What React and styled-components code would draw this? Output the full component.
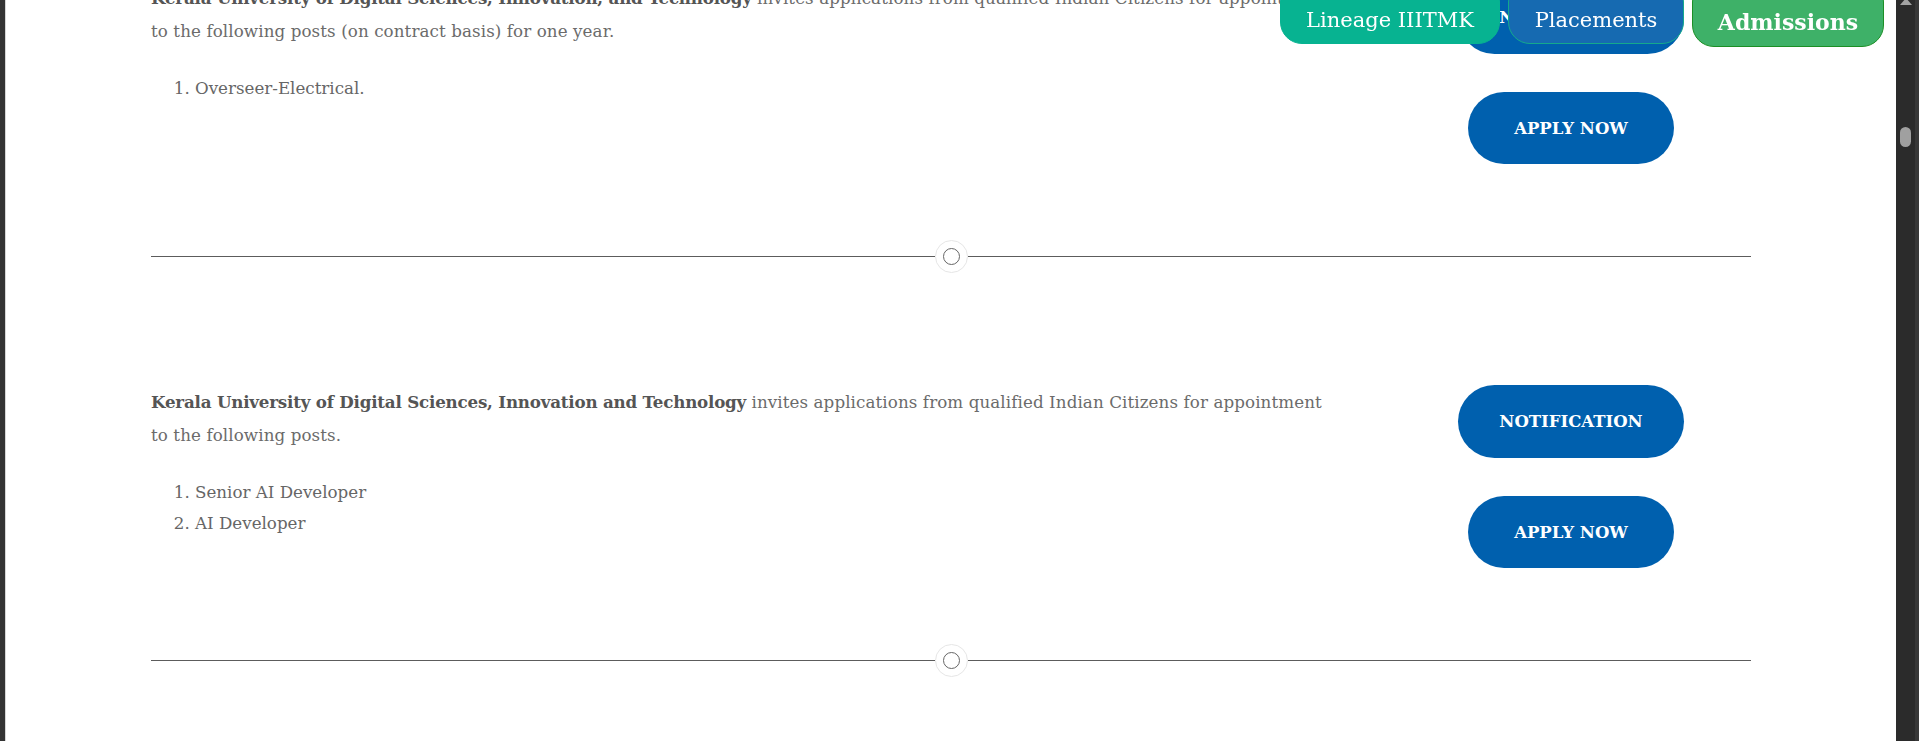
import React from 'react';
import styled, { createGlobalStyle } from 'styled-components';

const Global = createGlobalStyle`
  html, body { margin: 0; padding: 0; height: 100%; overflow: hidden; background: #fff; }
  #root { height: 100%; }
  * { box-sizing: border-box; }
`;

const Frame = styled.div`
  display: flex;
  width: 100%;
  height: 741px;
  overflow: hidden;
`;

const LeftEdge = styled.div`
  flex: 0 0 6px;
  background: #333;
  border-right: 1px solid #d6d6d6;
`;

const Main = styled.main`
  flex: 1;
  min-width: 0;
  overflow: hidden;
  background: #fff;
  font-family: "DejaVu Serif", "Liberation Serif", serif;
`;

const ScrollBar = styled.div`
  flex: 0 0 23px;
  display: flex;
  background: #383838;
`;

const Track = styled.div`
  width: 19px;
  background: #2b2b2b;
  display: flex;
  flex-direction: column;
  align-items: center;
`;

const Arrow = styled.div`
  width: 0;
  height: 0;
  margin-top: -2px;
  border-left: 6px solid transparent;
  border-right: 6px solid transparent;
  border-bottom: 7px solid #a3a3a3;
`;

const Thumb = styled.div`
  width: 11px;
  height: 20px;
  margin-top: 122px;
  border-radius: 6px;
  background: #a0a0a0;
`;

const Container = styled.div`
  max-width: 1600px;
  margin: -19px auto 0;
`;

const Row = styled.section`
  display: flex;
  align-items: flex-start;
`;

const TextCol = styled.div`
  flex: 0 0 1240px;
  padding-right: 52px;
`;

const Para = styled.p`
  margin: 1px 0 0;
  font-size: 16.7px;
  line-height: 33px;
  letter-spacing: 0.1px;
  color: #6b6b6b;

  strong {
    color: #555;
    font-weight: 600;
    letter-spacing: -0.2px;
  }
`;

const List = styled.ol`
  margin: 25px 0 0;
  padding-left: 44px;
  font-size: 16.7px;
  color: #666;

  li {
    line-height: 31px;
  }
`;

const ButtonCol = styled.div`
  flex: 1;
  display: flex;
  flex-direction: column;
  align-items: center;
  gap: 38px;
`;

const PillButton = styled.a`
  display: inline-flex;
  align-items: center;
  justify-content: center;
  height: ${(p) => p.$h}px;
  padding: 0 ${(p) => p.$px}px;
  border-radius: 40px;
  background: #0060ae;
  color: #fff;
  font-family: "DejaVu Serif", "Liberation Serif", serif;
  font-weight: 700;
  font-size: 16.5px;
  text-decoration: none;
  text-transform: uppercase;
`;

const Divider = styled.div`
  display: flex;
  align-items: center;
  margin: 76px 0 112px;
`;

const Line = styled.div`
  flex: 1;
  height: 1px;
  background: #5c5c5c;
`;

const Knob = styled.div`
  flex: 0 0 33px;
  height: 33px;
  border-radius: 50%;
  border: 1px solid #e6e6e6;
  background: #fff;
  display: flex;
  align-items: center;
  justify-content: center;
`;

const KnobInner = styled.div`
  width: 17px;
  height: 17px;
  border-radius: 50%;
  border: 1.5px solid #666;
`;

const Nav = styled.nav`
  position: fixed;
  top: -20px;
  right: 35px;
  display: flex;
  align-items: flex-start;
  gap: 8px;
  z-index: 10;
`;

const NavButton = styled.a`
  display: flex;
  align-items: center;
  justify-content: center;
  width: ${(p) => p.$w}px;
  height: ${(p) => p.$h}px;
  padding: 20px 0 4px;
  border-radius: 22px;
  background: ${(p) => p.$bg};
  border: 1px solid ${(p) => p.$border};
  color: #fff;
  font-family: "DejaVu Serif", "Liberation Serif", serif;
  font-size: ${(p) => p.$fs}px;
  font-weight: ${(p) => p.$fw};
  text-decoration: none;
  white-space: nowrap;
`;

const jobs = [
  {
    org: 'Kerala University of Digital Sciences, Innovation, and Technology',
    rest: ' invites applications from qualified Indian Citizens for appointment to the following posts (on contract basis) for one year.',
    posts: ['Overseer-Electrical.'],
  },
  {
    org: 'Kerala University of Digital Sciences, Innovation and Technology',
    rest: ' invites applications from qualified Indian Citizens for appointment to the following posts.',
    posts: ['Senior AI Developer', 'AI Developer'],
  },
];

export default function App() {
  return (
    <>
      <Global />
      <Frame>
        <LeftEdge />
        <Main>
          <Container>
            {jobs.map((job, i) => (
              <React.Fragment key={i}>
                <Row>
                  <TextCol>
                    <Para>
                      <strong>{job.org}</strong>
                      {job.rest}
                    </Para>
                    <List>
                      {job.posts.map((p) => (
                        <li key={p}>{p}</li>
                      ))}
                    </List>
                  </TextCol>
                  <ButtonCol>
                    <PillButton href="#" $h={73} $px={41}>Notification</PillButton>
                    <PillButton href="#" $h={72} $px={46}>Apply Now</PillButton>
                  </ButtonCol>
                </Row>
                <Divider>
                  <Line />
                  <Knob>
                    <KnobInner />
                  </Knob>
                  <Line />
                </Divider>
              </React.Fragment>
            ))}
          </Container>
        </Main>
        <ScrollBar>
          <Track>
            <Arrow />
            <Thumb />
          </Track>
        </ScrollBar>
      </Frame>
      <Nav>
        <NavButton href="#" $w={220} $h={64} $bg="#07b391" $border="#07b391" $fs={21} $fw={400}>
          Lineage IIITMK
        </NavButton>
        <NavButton href="#" $w={176} $h={64} $bg="#166ab1" $border="#14a98c" $fs={21} $fw={400}>
          Placements
        </NavButton>
        <NavButton href="#" $w={192} $h={67} $bg="#3eb168" $border="#1c8f25" $fs={22} $fw={700}>
          Admissions
        </NavButton>
      </Nav>
    </>
  );
}
